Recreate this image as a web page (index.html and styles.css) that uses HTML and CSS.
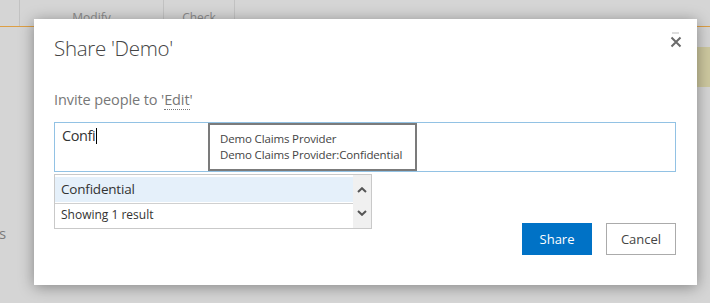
FILE: index.html
```html
<!DOCTYPE html>
<html>
<head>
<meta charset="utf-8">
<link rel="stylesheet" href="styles.css">
</head>
<body>
<div class="page">
  <div class="ribbon">
    <div class="tab tab-edge"></div>
    <div class="tab tab-modify">Modify</div>
    <div class="tab tab-check">Check</div>
  </div>
  <div class="statusbar"></div>
  <div class="nav">s</div>
</div>

<div class="dialog">
  <h1 class="title">Share 'Demo'</h1>
  <button class="close" aria-label="Close">
    <svg width="12" height="16" viewBox="0 0 12 16">
      <line x1="2" y1="1" x2="9" y2="1" stroke="#bbb" stroke-width="1"/>
      <path d="M1.5 5.5 L10.5 14.5 M10.5 5.5 L1.5 14.5" stroke="#6a6a6a" stroke-width="2" fill="none"/>
    </svg>
  </button>
  <div class="invite">Invite people to '<span class="perm">Edit</span>'</div>
  <div class="picker">
    <div class="entry">Confi<span class="caret"></span></div>
    <div class="tooltip">
      <div>Demo Claims Provider</div>
      <div>Demo Claims Provider:Confidential</div>
    </div>
    <div class="suggest">
      <div class="suggest-list">
        <div class="suggest-item">Confidential</div>
        <div class="suggest-count">Showing 1 result</div>
      </div>
      <div class="scroll">
        <svg width="10" height="6" viewBox="0 0 10 6"><path d="M1 5 L5 1.2 L9 5" stroke="#555" stroke-width="2" fill="none"/></svg>
        <svg width="10" height="6" viewBox="0 0 10 6"><path d="M1 1 L5 4.8 L9 1" stroke="#555" stroke-width="2" fill="none"/></svg>
      </div>
    </div>
  </div>
  <div class="actions">
    <button class="btn btn-primary">Share</button>
    <button class="btn btn-default">Cancel</button>
  </div>
</div>
</body>
</html>
```

FILE: styles.css
```css
html, body {
  margin: 0;
  padding: 0;
}
body {
  width: 710px;
  height: 303px;
  overflow: hidden;
  background: #d5d5d5;
  font-family: "Open Sans", "Noto Sans", sans-serif;
  position: relative;
}
.page {
  display: flex;
  flex-direction: column;
}
.ribbon {
  display: flex;
  height: 26px;
  border-bottom: 1px solid #dd9f45;
}
.tab {
  box-sizing: border-box;
  border-right: 1px solid #c2c2c2;
  font-size: 12px;
  color: #8a8a8a;
  text-align: center;
  padding-top: 9px;
}
.tab-edge { width: 20px; }
.tab-modify { width: 144px; }
.tab-check { width: 71px; }
.statusbar {
  margin-top: 20px;
  margin-left: 300px;
  height: 40px;
  background: #cdc89f;
}
.nav {
  margin-top: 136px;
  margin-left: -1px;
  font-size: 15px;
  color: #7c7c7c;
  line-height: 20px;
}

.dialog {
  position: absolute;
  left: 34px;
  top: 19px;
  width: 663px;
  height: 266px;
  box-sizing: border-box;
  background: #fff;
  padding: 15px 21px 0 20px;
  box-shadow: 0 2px 14px rgba(0,0,0,0.38);
  display: flex;
  flex-direction: column;
}
.title {
  margin: 0;
  font-size: 20.5px;
  font-weight: 300;
  line-height: 28px;
  letter-spacing: -0.3px;
  color: #444;
}
.close {
  position: absolute;
  right: 15px;
  top: 13px;
  border: 0;
  background: none;
  padding: 0;
  width: 12px;
  height: 16px;
  display: block;
}
.close svg { display: block; }
.invite {
  margin-top: 28px;
  font-size: 14.5px;
  line-height: 20px;
  letter-spacing: -0.1px;
  color: #777;
}
.perm {
  border-bottom: 1px dotted #777;
}
.picker {
  position: relative;
  margin-top: 12px;
  width: 622px;
}
.entry {
  box-sizing: border-box;
  height: 50px;
  border: 1px solid #92c2e4;
  padding: 3px 7px;
  font-size: 14.5px;
  line-height: 20px;
  letter-spacing: -0.4px;
  color: #333;
}
.caret {
  display: inline-block;
  width: 1px;
  height: 16px;
  background: #000;
  vertical-align: -3px;
  margin-left: 1px;
}
.tooltip {
  position: absolute;
  left: 154px;
  top: 1px;
  width: 209px;
  height: 48px;
  box-sizing: border-box;
  border: 2px solid #7b7b7b;
  background: #fff;
  padding: 6px 10px;
  font-size: 11.5px;
  line-height: 16px;
  letter-spacing: -0.15px;
  color: #444;
  white-space: nowrap;
}
.suggest {
  position: absolute;
  left: 0;
  top: 52px;
  width: 318px;
  height: 55px;
  box-sizing: border-box;
  border: 1px solid #c9c9c9;
  background: #fff;
  display: flex;
}
.suggest-list {
  flex: 1;
  padding-top: 2px;
}
.suggest-item {
  height: 25px;
  background: #e5f0fa;
  font-size: 13.5px;
  line-height: 25px;
  letter-spacing: -0.2px;
  padding-left: 6px;
  color: #333;
}
.suggest-count {
  margin-top: 1px;
  border-top: 1px solid #d0d0d0;
  height: 23px;
  font-size: 12px;
  line-height: 22px;
  padding-left: 6px;
  color: #333;
}
.scroll {
  width: 18px;
  background: #f0f0f0;
  display: flex;
  flex-direction: column;
  align-items: center;
  padding-top: 12px;
  gap: 17px;
}
.scroll svg { display: block; }
.actions {
  margin-top: 51px;
  display: flex;
  justify-content: flex-end;
  gap: 14px;
}
.btn {
  width: 70px;
  height: 32px;
  box-sizing: border-box;
  font-family: "Open Sans", "Noto Sans", sans-serif;
  font-size: 13px;
  padding: 0;
  margin: 0;
}
.btn-primary {
  background: #0072c6;
  border: 1px solid #0072c6;
  color: #fff;
}
.btn-default {
  background: #fff;
  border: 1px solid #ababab;
  color: #444;
}
```
